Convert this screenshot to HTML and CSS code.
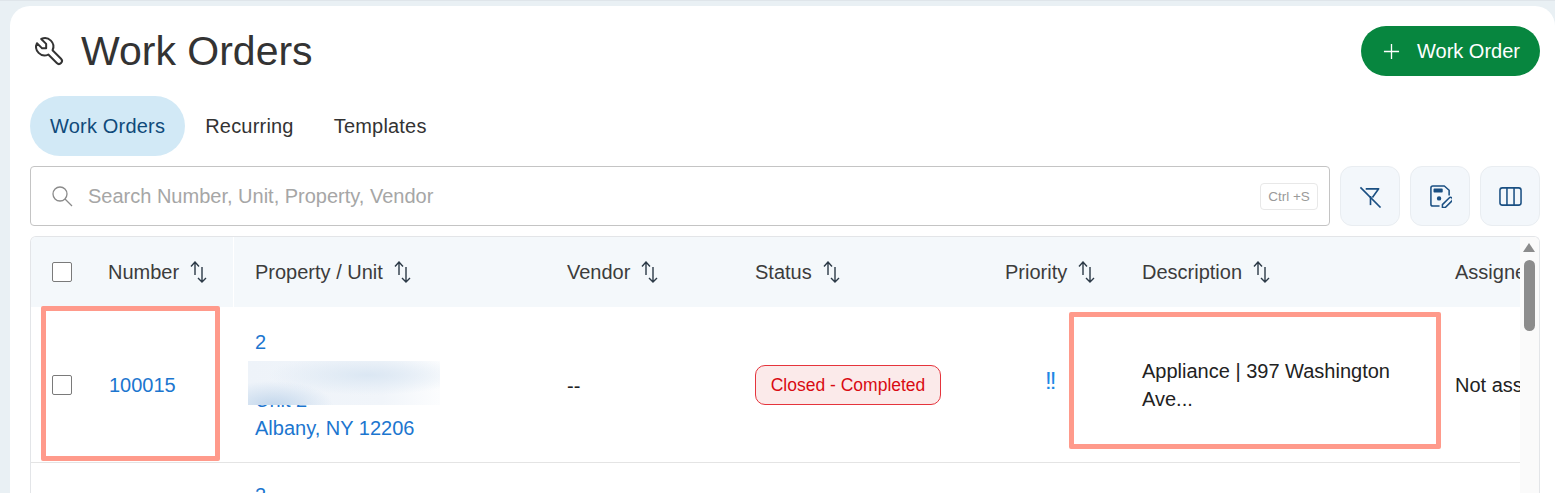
FILE: index.html
```html
<!DOCTYPE html>
<html lang="en">
<head>
<meta charset="utf-8">
<title>Work Orders</title>
<link rel="stylesheet" href="styles.css">
</head>
<body>
<main class="card">
  <header class="title-row">
    <div class="title">
      <svg class="wrench" viewBox="0 0 24 24" fill="none" stroke="currentColor" stroke-width="1.4" stroke-linecap="round" stroke-linejoin="round"><path d="M7 10h3v-3l-3.500 -3.500a6 6 0 0 1 8 8l6 6a2 2 0 0 1 -3 3l-6 -6a6 6 0 0 1 -8 -8l3.500 3.500"/></svg>
      <h1>Work Orders</h1>
    </div>
    <button class="add-btn">
      <svg class="plus" viewBox="0 0 18 18" fill="none" stroke="currentColor" stroke-width="1.4"><path d="M9 1v16M1 9h16"/></svg>
      <span>Work Order</span>
    </button>
  </header>

  <nav class="tabs">
    <a class="tab tab-active">Work Orders</a>
    <a class="tab">Recurring</a>
    <a class="tab">Templates</a>
  </nav>

  <div class="toolbar">
    <div class="search">
      <svg class="search-icon" viewBox="0 0 22 22" fill="none" stroke="currentColor" stroke-width="1.3"><circle cx="9" cy="9" r="7"/><path d="M14 14l7 7"/></svg>
      <span class="placeholder">Search Number, Unit, Property, Vendor</span>
      <kbd class="shortcut">Ctrl +S</kbd>
    </div>
    <button class="tool">
      <svg viewBox="0 0 24 24" fill="none" stroke="currentColor" stroke-width="1.700" stroke-linejoin="round"><path d="M1.500 2.500l21 21"/><path d="M7 4h13.500L14 13"/><path d="M12 11.500V21"/></svg>
    </button>
    <button class="tool">
      <svg viewBox="0 0 24 24" fill="none" stroke="currentColor" stroke-width="1.600" stroke-linejoin="round"><path d="M11 22H4a2 2 0 0 1-2-2V3a2 2 0 0 1 2-2h12l5 4.500V11"/><path class="solid" d="M5.500 4.500h8v2.500h-8z"/><circle class="solid" cx="10.500" cy="14" r="1.500"/><path d="M14 23.500v-3l7-7a1.500 1.500 0 0 1 3 3l-7 7z"/></svg>
    </button>
    <button class="tool">
      <svg viewBox="0 0 24 24" fill="none" stroke="currentColor" stroke-width="1.600"><rect x="1" y="3" width="22" height="18" rx="2.500"/><path d="M8.300 3v18M15.700 3v18"/></svg>
    </button>
  </div>

  <section class="table">
    <div class="table-view">
      <div class="row head">
        <div class="cell first">
          <span class="check"></span>
          <span class="head-label num-head">Number <svg class="sort" viewBox="0 0 17 22"><path d="M5 14V1M1 5.500L5 1l4 4.500M12 6v15M8 17l4 4 4-4"/></svg></span>
        </div>
        <div class="cell"><span class="head-label">Property / Unit <svg class="sort" viewBox="0 0 17 22"><path d="M5 14V1M1 5.500L5 1l4 4.500M12 6v15M8 17l4 4 4-4"/></svg></span></div>
        <div class="cell"><span class="head-label">Vendor <svg class="sort" viewBox="0 0 17 22"><path d="M5 14V1M1 5.500L5 1l4 4.500M12 6v15M8 17l4 4 4-4"/></svg></span></div>
        <div class="cell"><span class="head-label">Status <svg class="sort" viewBox="0 0 17 22"><path d="M5 14V1M1 5.500L5 1l4 4.500M12 6v15M8 17l4 4 4-4"/></svg></span></div>
        <div class="cell"><span class="head-label">Priority <svg class="sort" viewBox="0 0 17 22"><path d="M5 14V1M1 5.500L5 1l4 4.500M12 6v15M8 17l4 4 4-4"/></svg></span></div>
        <div class="cell"><span class="head-label">Description <svg class="sort" viewBox="0 0 17 22"><path d="M5 14V1M1 5.500L5 1l4 4.500M12 6v15M8 17l4 4 4-4"/></svg></span></div>
        <div class="cell"><span class="head-label">Assigned To</span></div>
      </div>

      <div class="row body-row">
        <div class="cell first">
          <span class="check"></span>
          <a class="link num">100015</a>
        </div>
        <div class="cell prop">
          <a class="link">2</a>
          <a class="link">&nbsp;</a>
          <a class="link">Unit 2</a>
          <a class="link">Albany, NY 12206</a>
          <span class="redacted"></span>
        </div>
        <div class="cell"><span class="dash">--</span></div>
        <div class="cell"><span class="status">Closed - Completed</span></div>
        <div class="cell"><span class="priority">!!</span></div>
        <div class="cell"><span class="desc">Appliance | 397 Washington Ave...</span></div>
        <div class="cell"><span class="plain">Not assigned</span></div>
      </div>

      <div class="row body-row next-row">
        <div class="cell first"></div>
        <div class="cell prop"><a class="link">2</a></div>
      </div>
    </div>

    <div class="scrollbar">
      <span class="scroll-up"></span>
      <span class="scroll-thumb"></span>
    </div>
  </section>
</main>

<div class="mark mark-left"></div>
<div class="mark mark-right"></div>
</body>
</html>
```

FILE: styles.css
```css
* { box-sizing: border-box; }

html, body {
  margin: 0;
  height: 493px;
  overflow: hidden;
}

body {
  position: relative;
  padding: 6px 0 0 10px;
  background: #e9f0f4;
  border-top: 1px solid #dfe5ea;
  font-family: "Liberation Sans", Arial, sans-serif;
  color: #333;
}

.card {
  height: 520px;
  margin-top: -1px;
  padding: 20px 15px 0 20px;
  background: #fff;
  border-radius: 20px 20px 0 0;
}

.title-row {
  display: flex;
  align-items: center;
  justify-content: space-between;
  height: 50px;
}

.title {
  display: flex;
  align-items: center;
  gap: 15px;
}

.wrench {
  width: 34px;
  height: 34px;
  margin-left: 2px;
  color: #333;
}

h1 {
  margin: 0;
  font-size: 41px;
  font-weight: 400;
  line-height: 50px;
  color: #333;
}

.add-btn {
  display: flex;
  align-items: center;
  gap: 17px;
  width: 179px;
  height: 50px;
  padding: 0 0 0 22px;
  border: 0;
  border-radius: 25px;
  background: #07863f;
  color: #fff;
  font: 400 20px "Liberation Sans", Arial, sans-serif;
}

.plus { width: 17px; height: 17px; }

.tabs {
  display: flex;
  margin-top: 20px;
}

.tab {
  display: block;
  height: 60px;
  padding: 0 20px;
  border-radius: 30px;
  font-size: 20px;
  letter-spacing: 0.2px;
  line-height: 60px;
  color: #333;
}

.tab-active {
  background: #d2e9f6;
  color: #0f4a7a;
}

.toolbar {
  display: flex;
  gap: 10px;
  margin-top: 10px;
}

.search {
  display: flex;
  align-items: center;
  flex: 1;
  height: 60px;
  padding: 0 11px 0 20px;
  border: 1px solid #c4c4c4;
  border-radius: 4px;
}

.search-icon {
  width: 22px;
  height: 22px;
  color: #8a8a8a;
}

.placeholder {
  flex: 1;
  margin-left: 15px;
  font-size: 20px;
  color: #a6a6a6;
}

.shortcut {
  width: 58px;
  height: 27px;
  border: 1px solid #e8e8e8;
  border-radius: 4px;
  font: 400 13.500px/25px "Liberation Sans", Arial, sans-serif;
  color: #9a9a9a;
  text-align: center;
}

.tool {
  display: flex;
  align-items: center;
  justify-content: center;
  width: 60px;
  height: 60px;
  padding: 0;
  border: 1px solid #e9edf1;
  border-radius: 12px;
  background: #f3f7fb;
  color: #1a4f82;
}

.tool svg { width: 23px; height: 23px; }
.solid { fill: currentColor; }

.table {
  display: flex;
  height: 300px;
  margin-top: 10px;
  border: 1px solid #e3e5e8;
  border-bottom: 0;
  border-radius: 6px 6px 0 0;
  overflow: hidden;
}

.table-view {
  flex: 1;
  min-width: 0;
  overflow: hidden;
}

.row {
  display: grid;
  grid-template-columns: 203px 312px 188px 250px 137px 313px 300px;
}

.head {
  height: 70px;
  background: #f4f8fb;
}

.head .first { border-right: 1px solid #fff; }

.body-row {
  height: 156px;
  border-bottom: 1px solid #e4e4e4;
}

.cell {
  position: relative;
  display: flex;
  align-items: center;
  padding-left: 21px;
  font-size: 20px;
  min-width: 0;
}

.first { padding-left: 21px; }

.check {
  flex: none;
  width: 20px;
  height: 20px;
  border: 1.500px solid #7a7a7a;
  border-radius: 2px;
  background: #fff;
}

.head-label {
  display: flex;
  align-items: center;
  gap: 11px;
  white-space: nowrap;
  color: #3c3c3c;
}

.num-head { margin-left: 36px; }

.sort {
  width: 17px;
  height: 22px;
  margin-top: -1px;
  fill: none;
  stroke: #2c3a47;
  stroke-width: 1.400;
}

.link {
  display: block;
  color: #1c76cf;
  line-height: 28.700px;
}

.num {
  margin-left: 37px;
  margin-top: 2px;
}

.prop {
  flex-direction: column;
  align-items: flex-start;
  justify-content: center;
  padding-top: 2px;
}

.redacted {
  position: absolute;
  left: 14px;
  top: 54px;
  width: 192px;
  height: 44px;
  background:
    radial-gradient(ellipse 60px 24px at 25px 44px, #c3d7ec, transparent),
    radial-gradient(ellipse 100px 20px at 120px 14px, #dbe7f3, transparent),
    linear-gradient(90deg, #eef3f9, #f1f5fa 70%, #fcfdfe);
}

.dash {
  margin-top: 4px;
  color: #222;
}

.status {
  display: block;
  width: 186px;
  height: 40px;
  border: 1px solid #e5343c;
  border-radius: 10px;
  background: #fbeaea;
  color: #d90b12;
  font-size: 17.500px;
  line-height: 38px;
  text-align: center;
  white-space: nowrap;
}

.priority {
  margin-left: 40px;
  margin-top: -8px;
  color: #1e88e5;
  font-size: 24px;
  letter-spacing: -2px;
}

.desc {
  display: block;
  width: 270px;
  margin-top: 1px;
  line-height: 28px;
  color: #222;
}

.plain {
  margin-top: 2px;
  white-space: nowrap;
  color: #222;
}

.next-row .prop { justify-content: flex-start; padding-top: 18px; }

.scrollbar {
  flex: none;
  position: relative;
  width: 19px;
  background: #fafafa;
}

.scroll-up {
  position: absolute;
  left: 3px;
  top: 6px;
  border: 6px solid transparent;
  border-top: 0;
  border-bottom: 9px solid #8c8c8c;
}

.scroll-thumb {
  position: absolute;
  left: 4px;
  top: 23px;
  width: 11px;
  height: 71px;
  border-radius: 6px;
  background: #8c8c8c;
}

.mark {
  position: absolute;
  border: 5px solid #ff9a8b;
  border-radius: 2px;
}

.mark-left {
  left: 41px;
  top: 305px;
  width: 179px;
  height: 155px;
}

.mark-right {
  left: 1069px;
  top: 311px;
  width: 372px;
  height: 137px;
}
```
